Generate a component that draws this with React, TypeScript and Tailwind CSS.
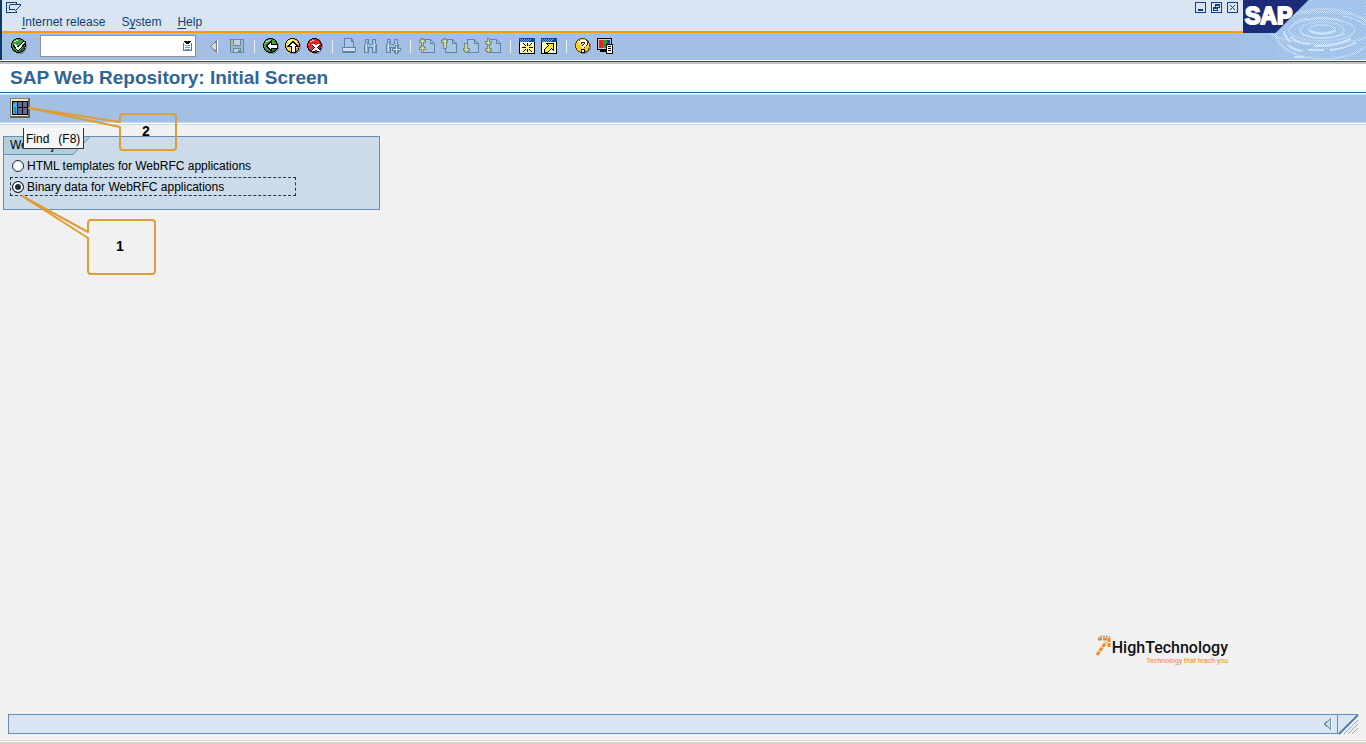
import { useState } from "react";
import type { ReactNode } from "react";

function Icon({ children, size = 16 }: { children: ReactNode; size?: number }) {
  return (
    <svg width={size} height={size} viewBox={`0 0 ${size} ${size}`} shapeRendering="crispEdges" fill="none" aria-hidden="true">
      {children}
    </svg>
  );
}

function ToolButton({ label, disabled, children }: { label: string; disabled?: boolean; children: ReactNode }) {
  return (
    <button type="button" aria-label={label} disabled={disabled} className="flex h-6 w-[22px] shrink-0 items-center justify-center">
      {children}
    </button>
  );
}

function Separator() {
  return (
    <div className="flex w-3 shrink-0 justify-center">
      <div className="h-[13px] w-px bg-[#eef0f0]" />
    </div>
  );
}

function Ball({ fill, shade, children }: { fill: string; shade: string; children: ReactNode }) {
  return (
    <Icon>
      <circle cx="9" cy="9" r="7" fill="#8585bd" />
      <circle cx="7.5" cy="7.5" r="7.4" fill="#000" />
      <circle cx="7.5" cy="7.5" r="6.6" fill={shade} />
      <circle cx="7" cy="7" r="5.8" fill={fill} />
      <path d="M3 4h2V3h2V2H5v1H3z" fill="#fff" opacity=".7" />
      {children}
    </Icon>
  );
}

const arrows = {
  firstPage: ["M3 1h1v1h1v1h1v1H4v3H3V4H1V3h1V2h1z", "M3 8h1v1h1v1h1v1H4v3H3v-3H1v-1h1V9h1z"],
  previousPage: ["M3 1h1v1h1v1h1v1H5v6H3V4H1V3h1V2h1z"],
  nextPage: ["M2 6h2v5h2v1H5v1H4v1H3v-1H2v-1H1v-1h1z"],
  lastPage: ["M3 1h1v3h2v1H5v1H4v1H3V6H2V5H1V4h2z", "M3 8h1v3h2v1H5v1H4v1H3v-1H2v-1H1v-1h2z"],
};

function PageIcon({ kind }: { kind: keyof typeof arrows }) {
  return (
    <Icon>
      <path d="M4.500 1.500h7l4 4v8.500h-11z" fill="#a9c6e4" stroke="#5c86a8" />
      <path d="M11.500 1.500v4h4" stroke="#5c86a8" />
      <path d="M5 14.500h10" stroke="#5c86a8" />
      {arrows[kind].map((d) => (
        <g key={d}>
          <path d={d} stroke="#6c8c98" strokeWidth="2" />
          <path d={d} fill="#dcd587" />
        </g>
      ))}
    </Icon>
  );
}

function Binoculars({ plus }: { plus?: boolean }) {
  return (
    <Icon>
      <path d="M1.500 6.500l1-1v-4h3v4l1 1h2l1-1v-4h3v4l1 1v8h-4v-5h-4v5h-4z" fill="#a4c4e6" stroke="#5c86a8" />
      <path d="M2 1h4v1H2zM9 1h4v1H9zM5 9h1v6H5zM9 9h1v6H9z" fill="#5c86a8" />
      <path d="M3 6v7M11 6v7" stroke="#d1def0" />
      <path d="M4.500 3v10M12.500 7v7" stroke="#8596c4" />
      {plus && <path d="M10.500 7.500h2v3h3v2h-3v3h-2v-3h-3v-2h3z" fill="#dfe8f0" stroke="#5c86a8" />}
    </Icon>
  );
}

function WindowIcon({ children }: { children: ReactNode }) {
  return (
    <Icon>
      <path d="M0 0h16v16H0z" fill="#000" />
      <path d="M0 0h16v4H0z" fill="#12498f" />
      <path d="M1 1h1M3 1h1M5 1h1M7 1h1M9 1h1M11 1h1M2 2h1M4 2h1M6 2h1M8 2h1M10 2h1M1 3h1M3 3h1M5 3h1M7 3h1M9 3h1" stroke="#6da6d8" />
      <path d="M1 4h14v11H1z" fill="#fffbd0" />
      {children}
    </Icon>
  );
}

function Ripples() {
  return (
    <svg className="block h-[60px] w-[123px] shrink-0" viewBox="0 0 123 60" aria-label="SAP" role="img">
      <defs>
        <pattern id="dots" width="4" height="4" patternUnits="userSpaceOnUse">
          <path d="M0 0h1v1H0zM2 2h1v1H2z" fill="#d3e5f9" />
        </pattern>
        <pattern id="dense" width="2" height="2" patternUnits="userSpaceOnUse">
          <path d="M0 0h1v1H0zM1 1h1v1H1z" fill="#d0e3f8" />
        </pattern>
      </defs>
      <path d="M0 0h123v60H0z" fill="#a1c2e8" />
      <path d="M66 0h57v60H33V33z" fill="url(#dots)" opacity=".5" />
      <g fill="none" stroke="url(#dense)">
        <ellipse cx="79" cy="28" rx="54" ry="16" strokeWidth="2" />
        <ellipse cx="79" cy="30" rx="33" ry="11" strokeWidth="2" />
        <ellipse cx="79" cy="30" rx="22" ry="8" strokeWidth="2" />
        <ellipse cx="79" cy="29" rx="13" ry="4" strokeWidth="2" />
        <ellipse cx="81" cy="34" rx="48" ry="25" strokeWidth="2" />
      </g>
      <g fill="none" stroke="#d0e3f9" strokeLinecap="round">
        <path d="M67 31q11 6 25 0" strokeWidth="2" />
        <path d="M58 34q19 9 44 0" strokeWidth="1" />
        <path d="M48 37q6 6 18 7M72 46q20 1 35-7" strokeWidth="2" />
        <path d="M41 32q1 5 6 9M45 45q6 5 14 6M66 50h14M88 50q15-2 24-7" strokeWidth="2" />
        <path d="M52 57h8" strokeWidth="2" />
        <path d="M62 20q16-5 34 0M100 16q15 3 22 9M52 22q6-3 12-4" strokeWidth="1" />
      </g>
      <path d="M0 0h65.500L32.500 33H0z" fill="#1b2b78" />
      <text x="2" y="24" className="font-['Liberation_Sans',Arial,sans-serif] text-[23px] font-bold" fill="#fff" stroke="#fff" strokeWidth="2" strokeLinejoin="round">SAP</text>
    </svg>
  );
}

function WinButton({ label, children }: { label: string; children: ReactNode }) {
  return (
    <button type="button" aria-label={label} className="flex size-[11px] items-center justify-center">
      <Icon size={11}>
        <path d="M.5.5h10v10H.5z" stroke="#0f427f" />
        {children}
      </Icon>
    </button>
  );
}

function Menu({ before = "", hot, after }: { before?: string; hot: string; after: string }) {
  return (
    <button type="button" className="text-[12px] leading-4 text-[#0a3f7c]">
      {before}
      <span className="underline underline-offset-2">{hot}</span>
      {after}
    </button>
  );
}

const options = ["HTML templates for WebRFC applications", "Binary data for WebRFC applications"];

export default function App() {
  const [selected, setSelected] = useState(1);
  return (
    <div className="relative flex min-h-screen flex-col bg-[#f1f1f1] font-['Liberation_Sans',Arial,sans-serif] text-[12px] text-black">
      <header className="flex border-b border-white">
        <div className="flex min-w-0 flex-1 flex-col border-l-2 border-[#0b3a6b]">
          <div className="flex h-[31px] justify-between bg-[#d9e5f3]">
            <div className="flex flex-col">
              <button type="button" aria-label="Window menu" className="ml-1 h-[14px] w-4">
                <svg width="16" height="13" viewBox="0 0 16 13" fill="none" stroke="#0f427f" shapeRendering="crispEdges" aria-hidden="true">
                  <path d="M10.500 3.500v-2h-10v10h10v-2M3.500 3.500h11M3.500 3.500v5h4" />
                  <path d="M14 4h1v1h-1zM13 5h1v1h-1zM12 6h1v1h-1zM11 7h1v1h-1zM10 8h1v1h-1zM9 9h1v1H9zM8 8h1v1H8z" fill="#0f427f" stroke="none" />
                </svg>
              </button>
              <nav className="ml-5 flex gap-4">
                <Menu hot="I" after="nternet release" />
                <Menu before="S" hot="y" after="stem" />
                <Menu hot="H" after="elp" />
              </nav>
            </div>
            <div className="flex gap-[5px] pt-[2px] pr-[5px]">
              <WinButton label="Minimize"><path d="M3 7h5v2H3z" fill="#0f427f" /></WinButton>
              <WinButton label="Restore"><path d="M4 2h5v4H7v3H2V5h2z" fill="#0f427f" /><path d="M5 4h3v1H5zM3 7h3v1H3z" fill="#d9e5f3" /></WinButton>
              <WinButton label="Close"><path d="M3 3h1v1H3zM7 3h1v1H7zM4 4h1v1H4zM6 4h1v1H6zM5 5h1v1H5zM4 6h1v1H4zM6 6h1v1H6zM3 7h1v1H3zM7 7h1v1H7z" fill="#0f427f" /></WinButton>
            </div>
          </div>
          <div className="h-[2px] bg-[#ff9c08]" />
          <div className="flex h-[27px] items-center bg-[#a3c0e4] pb-px pl-[6px]">
            <ToolButton label="Enter">
              <Ball fill="#3f9d3f" shade="#176b25">
                <path d="M2 6h3l2 3 5-6h3v2l-7 8H6L2 8z" fill="#000" />
                <path d="M3 6h2l2 4 5-6h2L8 12H6z" fill="#fff" />
              </Ball>
            </ToolButton>
            <div className="ml-[10px] flex h-[22px] w-[156px] items-center border border-[#8d9196] bg-white pr-[3px]">
              <input aria-label="Command" className="h-full min-w-0 flex-1 px-1 outline-none" />
              <button type="button" aria-label="Command history">
                <svg width="9" height="12" viewBox="0 0 9 12" shapeRendering="crispEdges" fill="none" aria-hidden="true">
                  <path d="M.5 2.500v8h8v-8" stroke="#4b7aa5" />
                  <path d="M2 5.500h5M2 7.500h5M2 9.500h5" stroke="#6f96bb" />
                  <path d="M1 1h7v1H7v1H6v1H3V3H2V2H1z" fill="#000" />
                </svg>
              </button>
            </div>
            <div className="ml-2 flex items-center">
              <ToolButton label="Back one entry">
                <Icon>
                  <path d="M9.500 3v11L3.500 8.500z" fill="#d9d8cb" stroke="#77828b" />
                  <path d="M10.500 2v13" stroke="#fff" />
                </Icon>
              </ToolButton>
              <ToolButton label="Save" disabled>
                <Icon>
                  <path d="M1.500 1.500h13v13h-12l-1-1z" fill="#9ab9ce" stroke="#65889d" />
                  <path d="M4.500 1.500h7v6h-7zM4.500 10.500h7v4h-7z" fill="#bdd2e3" stroke="#65889d" />
                  <path d="M3 2h1v6H3zM12 2h1v6h-1z" fill="#b9bb8a" />
                  <path d="M9 12h2v2H9z" fill="#65889d" />
                </Icon>
              </ToolButton>
              <Separator />
              <ToolButton label="Back">
                <Ball fill="#43a349" shade="#1b6c36">
                  <path d="M3.500 8L8 3.500V6h6v4H8v2.500z" fill="#fff" stroke="#000" />
                </Ball>
              </ToolButton>
              <ToolButton label="Exit">
                <Ball fill="#ffe44c" shade="#e69a17">
                  <path d="M8 3.500L12.500 8H10v6H6V8H3.500z" fill="#fff" stroke="#000" />
                </Ball>
              </ToolButton>
              <ToolButton label="Cancel">
                <Ball fill="#ef2929" shade="#b50c18">
                  <path d="M6 6l6 7M12 6l-6 7" stroke="#000" strokeWidth="3" />
                  <path d="M6 6l6 7M12 6l-6 7" stroke="#fff" strokeWidth="2" />
                </Ball>
              </ToolButton>
              <Separator />
              <ToolButton label="Print" disabled>
                <Icon>
                  <path d="M3.500 9.500v-9h7l2 3v6" fill="#a9c6e6" stroke="#5c86a8" />
                  <path d="M10.500 .5v3h2" stroke="#5c86a8" />
                  <path d="M1.500 9.500h13v4h-13z" fill="#d1deee" stroke="#5c86a8" />
                  <path d="M2 14.500h12" stroke="#5c86a8" />
                </Icon>
              </ToolButton>
              <ToolButton label="Find" disabled><Binoculars /></ToolButton>
              <ToolButton label="Find next" disabled><Binoculars plus /></ToolButton>
              <Separator />
              <ToolButton label="First page" disabled><PageIcon kind="firstPage" /></ToolButton>
              <ToolButton label="Previous page" disabled><PageIcon kind="previousPage" /></ToolButton>
              <ToolButton label="Next page" disabled><PageIcon kind="nextPage" /></ToolButton>
              <ToolButton label="Last page" disabled><PageIcon kind="lastPage" /></ToolButton>
              <Separator />
              <ToolButton label="New session">
                <WindowIcon>
                  <path d="M4 6h8v7H4z" fill="#fff36a" />
                  <path d="M8 5h1v3H8zM8 11h1v3H8zM3 9h4v1H3zM10 9h4v1h-4zM4 5h1v1H4zM5 6h1v1H5zM6 7h1v1H6zM12 5h1v1h-1zM11 6h1v1h-1zM10 7h1v1h-1zM4 13h1v1H4zM5 12h1v1H5zM6 11h1v1H6zM12 13h1v1h-1zM11 12h1v1h-1zM10 11h1v1h-1z" fill="#000" />
                </WindowIcon>
              </ToolButton>
              <ToolButton label="Create shortcut">
                <WindowIcon>
                  <path d="M5.500 5.500h7v7l-2-2-4 4h-3v-3l4-4z" fill="#ffe735" stroke="#000" />
                </WindowIcon>
              </ToolButton>
              <Separator />
              <ToolButton label="Help">
                <Icon>
                  <circle cx="9" cy="9" r="7" fill="#8585bd" />
                  <circle cx="7.500" cy="7.500" r="7.400" fill="#59400b" />
                  <circle cx="7.500" cy="7.500" r="6.600" fill="#ffc928" />
                  <path d="M5 6V4l1-1h4l1 1v2L8 8.500V10" stroke="#3a2a05" strokeWidth="3" />
                  <path d="M6 11h4v4H6z" fill="#000" />
                  <path d="M5 6V4l1-1h4l1 1v2L8 8.500V10" stroke="#fff" strokeWidth="2" />
                  <path d="M7 12h2v2H7z" fill="#fff" />
                </Icon>
              </ToolButton>
              <ToolButton label="Customize layout">
                <Icon>
                  <path d="M0 0h15v12H0z" fill="#000" />
                  <path d="M1 1h13v10H1z" fill="#c5ccd4" />
                  <path d="M2 2h4v8H2z" fill="#e91e2a" />
                  <path d="M6 2h4v8H6z" fill="#19a32c" />
                  <path d="M10 2h3v8h-3z" fill="#123fb5" />
                  <path d="M3 12h6v2H3z" fill="#000" />
                  <path d="M9.500 6.500h6v9h-6z" fill="#fff" stroke="#000" />
                  <path d="M11 8.500h3M11 10.500h3M11 12.500h3" stroke="#000" />
                </Icon>
              </ToolButton>
            </div>
          </div>
        </div>
        <Ripples />
      </header>

      <div className="border-t border-[#484848] bg-white">
        <h1 className="border-t-2 border-[#c4c4c4] px-[10px] pb-px text-[19px] leading-[27px] font-bold text-[#2f6697]">
          SAP Web Repository: Initial Screen
        </h1>
      </div>
      <div className="border-t border-[#1d5f98] bg-white pt-px">
        <div className="flex h-[29px] items-center border-y border-[#cbdcee] bg-[#a3c0e4] pb-[2px] pl-[10px]">
          <button type="button" aria-label="Find (F8)" className="size-5">
            <svg width="20" height="20" viewBox="0 0 20 20" shapeRendering="crispEdges" aria-hidden="true">
              <path d="M0 0h20v20H0z" fill="#62615d" />
              <path d="M0 0h19v1H1v18H0z" fill="#858078" />
              <path d="M1 1h17v17H1z" fill="#f5e6c3" />
              <path d="M2 3h16v14H2z" fill="#000" />
              <path d="M3 4h4v12H3z" fill="#37b9ee" />
              <path d="M3 4h2v2H3zM4 9h2v7H4z" fill="#168ec9" />
              <path d="M8 4h4v5H8zM8 10h4v6H8zM13 4h4v5h-4zM13 10h4v6h-4z" fill="#67659c" />
            </svg>
          </button>
        </div>
        <div className="h-px bg-white" />
        <div className="h-px bg-[#cbdcee]" />
      </div>

      <main className="flex flex-1 flex-col pt-[11px]">
        <fieldset aria-label="Web objects" className="relative ml-[3px] h-[74px] w-[377px] border border-[#668eb6] bg-[#cbdbea]">
          <div className="relative h-[19px] w-[86px]">
            <svg className="absolute inset-0" width="86" height="18" viewBox="0 0 86 18" aria-hidden="true">
              <path d="M0 0h85L69 17.500H0z" fill="#afcfdc" />
              <path d="M85.500 0L69 17.500H0" fill="none" stroke="#668eb6" />
            </svg>
            <span className="relative block pl-[6px] leading-4">Web objects</span>
          </div>
          <div className="flex flex-col gap-[2px] pl-[6px]">
            {options.map((text, i) => (
              <label
                key={text}
                className={
                  i === selected
                    ? "flex h-[19px] w-[286px] items-center border border-dashed border-[#26354c]"
                    : "flex h-[19px] w-[286px] items-center border border-transparent"
                }
              >
                <input
                  type="radio"
                  name="object"
                  checked={i === selected}
                  onChange={() => setSelected(i)}
                  className="mr-[3px] ml-px size-3 shrink-0 appearance-none rounded-full border border-[#1d2430] bg-white checked:bg-[#1d2b42] checked:shadow-[inset_0_0_0_2px_white]"
                />
                {text}
              </label>
            ))}
          </div>
        </fieldset>

        <div className="mt-auto mr-[138px] mb-[49px] flex self-end">
          <svg width="17" height="22" viewBox="0 0 17 22" aria-hidden="true">
            <path d="M2 20L11 7" stroke="#f6862a" strokeWidth="3" strokeDasharray="4 1" />
            <path d="M3 4h11v9" fill="none" stroke="#f6862a" strokeWidth="3" strokeDasharray="4 1" />
            <path d="M5 1.500h10" stroke="#9b9b98" strokeWidth="1.500" strokeDasharray="2 1" />
          </svg>
          <div className="flex flex-col items-end pt-[3px] font-['Roboto',sans-serif]">
            <span className="text-[16px] leading-[19px] font-medium text-[#111]">HighTechnology</span>
            <span className="text-[7px] leading-[8px] text-[#f6862a]">Technology that teach you</span>
          </div>
        </div>
      </main>

      <footer>
        <div className="mx-2 mb-[6px] flex h-5 border border-r-0 border-[#668eb6] bg-[#d9e5f3]">
          <div role="status" className="flex-1" />
          <button type="button" aria-label="Expand status bar" className="flex w-[14px] items-center">
            <svg width="10" height="14" viewBox="0 0 10 14" shapeRendering="crispEdges" aria-hidden="true">
              <path d="M7.500 1.500v11L1.500 7z" fill="#d6d8d8" stroke="#6b8fb0" />
              <path d="M8.500 1v12" stroke="#fff" />
            </svg>
          </button>
          <svg className="shrink-0" width="21" height="18" viewBox="0 0 21 18" overflow="visible" aria-hidden="true">
            <path d="M2 19L21 0v19z" fill="#f1f1f1" />
            <path d="M.5 0v18" stroke="#668eb6" />
            <path d="M2 19L21 0" stroke="#4d7faf" strokeWidth="2" />
            <path d="M7 19L21 5M11 19L21 9M15 19L21 13" stroke="#9aa4ad" />
          </svg>
        </div>
        <div className="h-px bg-[#d4d0c8]" />
        <div className="h-px bg-white" />
        <div className="h-[2px] bg-[#d4d0c8]" />
      </footer>

      <div role="tooltip" className="absolute top-[128px] left-[23px] flex h-[21px] w-[61px] items-center gap-[9px] border-r border-b border-l border-[#33373c] bg-[#f4f5f7] pt-[2px] pl-[2px] whitespace-nowrap">
        <span>Find</span>
        <span>(F8)</span>
      </div>
      <svg className="pointer-events-none absolute top-[100px] left-0" width="180" height="180" viewBox="0 100 180 180" fill="none" stroke="#df9e35" strokeWidth="2" strokeLinejoin="round" aria-hidden="true">
        <path d="M120 122V117q0-3 3-3h50q3 0 3 3v30q0 3-3 3h-50q-3 0-3-3v-20L29 108z" />
        <path d="M88 232v-9q0-3 3-3h61q3 0 3 3v48q0 3-3 3H91q-3 0-3-3v-33L22 196z" />
      </svg>
      <div className="pointer-events-none absolute top-[122px] left-[136px] w-5 text-center text-[14px] leading-[18px] font-bold">2</div>
      <div className="pointer-events-none absolute top-[237px] left-[110px] w-5 text-center text-[14px] leading-[18px] font-bold">1</div>
    </div>
  );
}
